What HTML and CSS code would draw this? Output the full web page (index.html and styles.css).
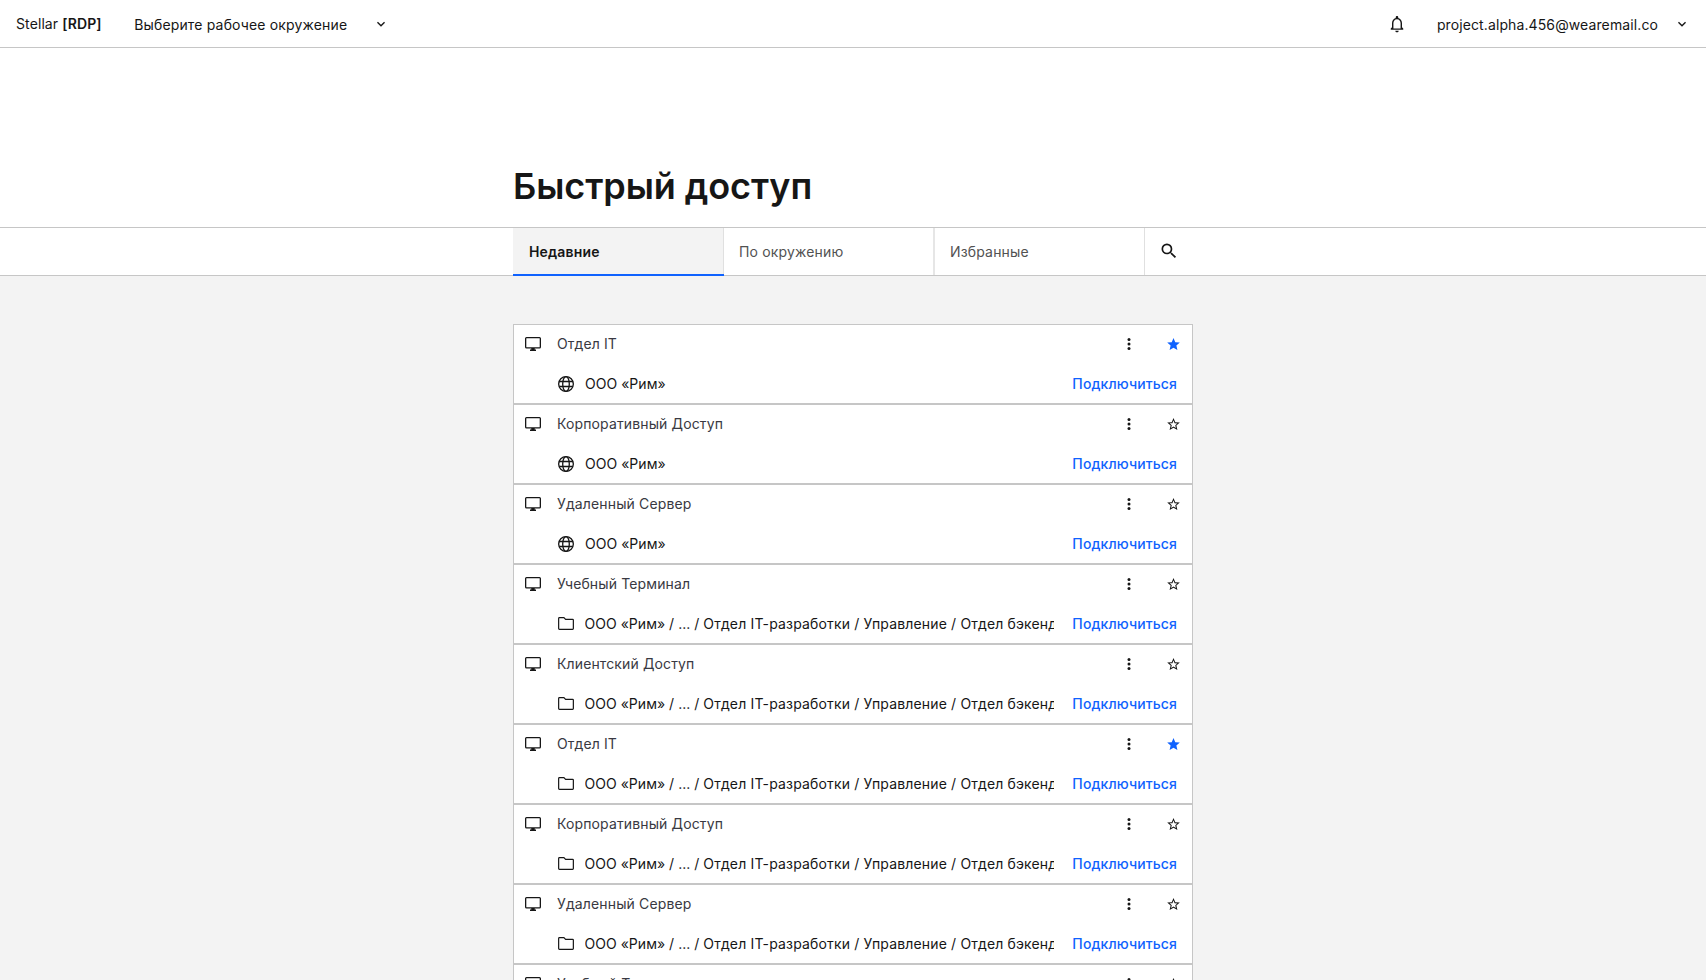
FILE: index.html
```
<!DOCTYPE html>
<html lang="ru">
<head>
<meta charset="utf-8">
<title>Stellar [RDP]</title>
<link rel="stylesheet" href="styles.css">
</head>
<body>
<svg class="sprite" aria-hidden="true">
  <symbol id="chevron" viewBox="0 0 24 24"><path d="M16.59 8.59 12 13.17 7.41 8.59 6 10l6 6 6-6z"/></symbol>
  <symbol id="bell" viewBox="0 0 24 24"><path d="M12 22c1.1 0 2-.9 2-2h-4c0 1.1.9 2 2 2zm6-6v-5c0-3.07-1.63-5.64-4.5-6.32V4c0-.83-.67-1.5-1.5-1.5s-1.5.67-1.5 1.5v.68C7.64 5.36 6 7.92 6 11v5l-1.500 1.400V19h15v-1.600zm-1.700 1.300H7.700V11c0-2.480 1.600-4.800 4.300-4.800s4.300 2.320 4.300 4.800z"/></symbol>
  <symbol id="search" viewBox="0 0 24 24"><path d="M15.5 14h-.79l-.28-.27A6.471 6.471 0 0 0 16 9.500 6.500 6.500 0 1 0 9.500 16c1.610 0 3.090-.590 4.230-1.570l.270.280v.790l5 4.990L20.490 19zm-6 0C7.010 14 5 11.990 5 9.500S7.010 5 9.500 5 14 7.010 14 9.500 11.990 14 9.500 14z"/></symbol>
  <symbol id="monitor" viewBox="0 0 16 14"><rect x=".65" y=".65" width="14.7" height="10.2" rx=".9" fill="none" stroke="currentColor" stroke-width="1.3"/><path d="M6.300 11h3.400v1.600H11V14H5v-1.400h1.300z"/></symbol>
  <symbol id="globe" viewBox="0 0 16 16"><g fill="none" stroke="currentColor" stroke-width="1.3"><circle cx="8" cy="8" r="7.350"/><ellipse cx="8" cy="8" rx="3.300" ry="7.350"/><path d="M1.200 5.500h13.600M1.200 10.500h13.600"/></g></symbol>
  <symbol id="folder" viewBox="0 0 16 13"><path d="M1.400.65h4.500l1.700 1.700h7a.75.75 0 0 1 .75.75v8.500a.75.75 0 0 1-.75.75H1.400a.75.75 0 0 1-.75-.75V1.400A.75.75 0 0 1 1.400.65z" fill="none" stroke="currentColor" stroke-width="1.200"/></symbol>
  <symbol id="dots" viewBox="0 0 4 12"><circle cx="2" cy="1.500" r="1.500"/><circle cx="2" cy="6" r="1.500"/><circle cx="2" cy="10.500" r="1.500"/></symbol>
  <symbol id="star-outline" viewBox="2 2 20 19"><path d="m22 9.240-7.190-.620L12 2 9.190 8.630 2 9.240l5.460 4.730L5.820 21 12 17.270 18.180 21l-1.630-7.030zM12 15.400l-3.760 2.270 1-4.280-3.320-2.880 4.380-.380L12 6.100l1.710 4.040 4.380.380-3.320 2.880 1 4.280z"/></symbol>
  <symbol id="star" viewBox="2 2 20 19"><path d="M12 17.270 18.180 21l-1.640-7.030L22 9.240l-7.190-.610L12 2 9.190 8.630 2 9.240l5.460 4.730L5.820 21z"/></symbol>
</svg>

<header class="topbar">
  <div class="brand">Stellar <b>[RDP]</b></div>
  <div class="env">Выберите рабочее окружение</div>
  <svg class="chevron env-chevron"><use href="#chevron"/></svg>
  <svg class="bell"><use href="#bell"/></svg>
  <div class="account">project.alpha.456@wearemail.co</div>
  <svg class="chevron"><use href="#chevron"/></svg>
</header>

<h1 class="title">Быстрый доступ</h1>

<nav class="tabs">
  <div class="tabs-inner">
    <a class="tab active">Недавние</a>
    <a class="tab tab-env">По окружению</a>
    <a class="tab tab-favourites">Избранные</a>
    <a class="tab-search"><svg class="search"><use href="#search"/></svg></a>
  </div>
</nav>

<main class="list" id="list"></main>
<script src="list.js"></script>
</body>
</html>
```
FILE: list.js
```
const org = "ООО «Рим»";
const nested = "Отдел IT-разработки / Управление / Отдел бэкенда";
const sessions = [
  ["Отдел IT", false, true],
  ["Корпоративный Доступ", false, false],
  ["Удаленный Сервер", false, false],
  ["Учебный Терминал", true, false],
  ["Клиентский Доступ", true, false],
  ["Отдел IT", true, true],
  ["Корпоративный Доступ", true, false],
  ["Удаленный Сервер", true, false],
  ["Учебный Терминал", true, false]
];
const icon = (name, cls = name) => `<svg class="${cls}"><use href="#${name}"/></svg>`;
document.getElementById("list").innerHTML = sessions.map(([name, isNested, starred]) => `
  <article class="card">
    <div class="card-row">
      ${icon("monitor")}
      <span class="name">${name}</span>
      ${icon("dots")}
      ${starred ? icon("star", "star starred") : icon("star-outline", "star")}
    </div>
    <div class="card-row place-row">
      ${icon(isNested ? "folder" : "globe")}
      <span class="place${isNested ? " nested" : ""}"><span class="org">${org}${isNested ? " / ... / " : ""}</span>${isNested ? nested : ""}</span>
      <a class="connect">Подключиться</a>
    </div>
  </article>`).join("");
```
FILE: styles.css
```
* { box-sizing: border-box; }
body {
  margin: 0;
  height: 980px;
  overflow: hidden;
  display: flex;
  flex-direction: column;
  background: #f3f3f3;
  color: #161616;
  font: 14px/18px Inter, sans-serif;
  letter-spacing: .16px;
}
svg { display: block; flex: none; fill: currentColor; }
.sprite { display: none; }

.topbar {
  height: 48px;
  flex: none;
  display: flex;
  align-items: center;
  padding: 0 16px;
  background: #fff;
  border-bottom: 1px solid #c6c6c6;
}
.brand { letter-spacing: .1px; }
.brand b { font-weight: 600; }
.env { margin-left: 32.5px; padding-top: 2px; }
.chevron { width: 16px; height: 16px; }
.env-chevron { margin-left: 26px; }
.bell { width: 20px; height: 20px; margin-left: auto; }
.account { margin: 0 16px 0 30px; padding-top: 2px; letter-spacing: .11px; }

.title {
  height: 179px;
  flex: none;
  margin: 0;
  padding: 116px 0 0 513px;
  background: #fff;
  font-size: 36px;
  line-height: 44px;
  font-weight: 600;
  letter-spacing: -.08px;
}

.tabs {
  height: 49px;
  flex: none;
  background: #fff;
  border-top: 1px solid #c6c6c6;
  border-bottom: 1px solid #c6c6c6;
}
.tabs-inner { display: flex; width: 680px; height: 48px; margin: 0 auto; }
.tab {
  height: 47px;
  padding: 15px 15px 0;
  color: #525252;
}
.tab.active {
  width: 211px;
  height: 48px;
  padding-left: 16px;
  background: linear-gradient(#e0e0e0, #e0e0e0) right / 1px 100% no-repeat #f3f3f3;
  color: #161616;
  font-weight: 600;
  border-bottom: 2px solid #0f62fe;
}
.tab-env { width: 209px; }
.tab-favourites { width: 211px; border-left: 2px solid #e6e6e6; }
.tab-search { padding: 13px 0 0 14px; border-left: 1px solid #e0e0e0; height: 47px; }
.search { width: 20px; height: 20px; }

.list { width: 680px; height: 656px; overflow: hidden; flex: none; margin: 48px auto 0; }
.card { height: 80px; background: #fff; border: 1px solid #c6c6c6; }
.card-row { height: 38px; display: flex; align-items: center; padding: 0 12px 0 11px; }
.monitor { width: 16px; height: 14px; }
.name { flex: 1; margin-left: 16px; color: #393942; letter-spacing: .13px; }
.dots { width: 4px; height: 12px; margin-right: 36px; }
.star { width: 13px; height: 12px; }
.starred { color: #0f62fe; }
.place-row { height: 40px; padding: 1px 15px 0 44px; }
.globe { width: 16px; height: 16px; }
.folder { width: 16px; height: 13px; }
.place { flex: 1; min-width: 0; margin: 0 18px 0 11px; overflow: hidden; white-space: nowrap; }
.nested { margin-left: 10.5px; }
.org { letter-spacing: .03px; }
.connect { color: #0f62fe; font-weight: 500; letter-spacing: .11px; }
```
